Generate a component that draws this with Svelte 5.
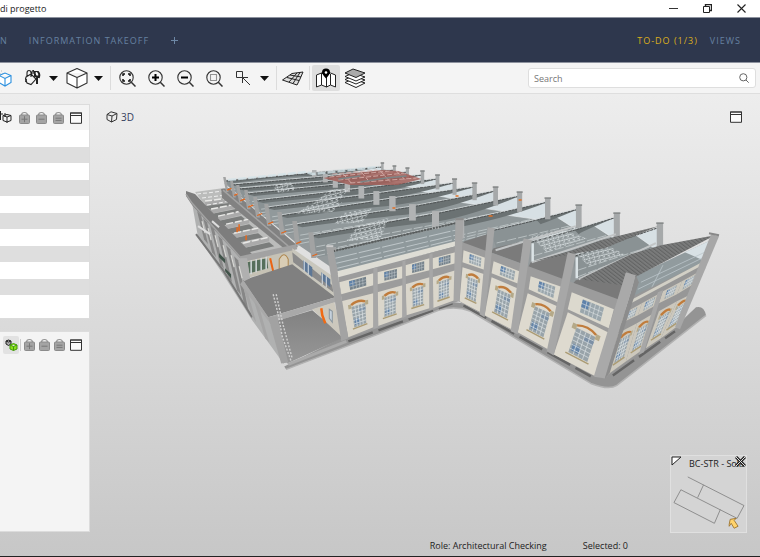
<script>
  const zoomTools = [
    { label: 'Zoom to fit', kind: 'fit' },
    { label: 'Zoom in', kind: 'in' },
    { label: 'Zoom out', kind: 'out' },
    { label: 'Zoom to area', kind: 'area' }
  ];
  const rows = Array.from({ length: 11 }, (_, i) => i);
  let query = $state('');

  const pts = (list) => list.map((p) => p.map((n) => n.toFixed(1)).join(',')).join(' ');
  const mix = (a, b, t) => [a[0] + (b[0] - a[0]) * t, a[1] + (b[1] - a[1]) * t];
  // point on a wall panel given as [top left, top right, bottom right, bottom left]
  const at = (q, u, v) => mix(mix(q[0], q[1], u), mix(q[3], q[2], u), v);
  const sub = (q, u0, u1, v0, v1) => [at(q, u0, v0), at(q, u1, v0), at(q, u1, v1), at(q, u0, v1)];
  const line = (a, b) => `M${a[0].toFixed(1)} ${a[1].toFixed(1)}L${b[0].toFixed(1)} ${b[1].toFixed(1)}`;
  const bars = (q, cols, lines) => {
    let d = '';
    for (let i = 1; i < cols; i++) d += line(at(q, i / cols, 0), at(q, i / cols, 1));
    for (let i = 1; i < lines; i++) d += line(at(q, 0, i / lines), at(q, 1, i / lines));
    return d;
  };

  // roof ridges, back to front: left end, middle post, right end
  const ridges = [
    [[225, 181], [313, 173], [382, 167]],
    [[232, 185], [324, 177], [394, 170]],
    [[238, 189], [334, 181], [407, 172]],
    [[246, 194], [346, 184], [422, 175]],
    [[255, 201], [360, 189], [437, 179]],
    [[266, 208], [375, 194], [454, 183]],
    [[279, 216], [391, 199], [474, 187]],
    [[294, 225], [411, 207], [495, 191]],
    [[310, 236], [434, 214], [519, 196]],
    [[332, 251], [459, 222], [547, 202]],
    [[490, 231], [536, 220], [578, 209]],
    [[527, 243], [574, 230], [616, 217]],
    [[571, 257], [618, 241], [659, 227]]
  ];
  const teeth = ridges.map((r, i) => {
    const [l, m, e] = r;
    const h = 6 + i * 1.35;
    const foot = [e[0] - 4, e[1] + h];
    const short = i > 9;
    return {
      l, m, e, h, short,
      ridge: `M${l}L${m}L${e}`,
      lens: i > 8
        ? `M${m}L${e}Q${e[0] - 34} ${e[1] + 14} ${m[0] + 4} ${m[1] + 4}Z`
        : `M${l}L${m}L${e}Q${m[0] + 28} ${m[1] + h * 0.3} ${m[0] - 6} ${m[1] + h * 0.5}T${l[0] + 8} ${l[1] + 2}Z`,
      plane: pts([l, m, e, foot, [m[0] + 4, m[1] + h + 5], [l[0] + 8, l[1] + h + 4]]),
      glass: pts([mix(m, e, 0.42), e, foot]),
      seam: [0.45, 0.75, 1].map((k) => line([l[0] + 6, l[1] + h * k + 3], [foot[0] - 3, foot[1] + (k - 1) * h * 0.3])).join(''),
      w: 2.5 + i * 0.32
    };
  });

  const lowBays = [
    [[341, 301], [373, 293], [373, 327], [348, 337]],
    [[377, 292], [402, 285], [402, 317], [377, 326]],
    [[405, 284], [429, 277], [429, 308], [406, 315]],
    [[432, 277], [455, 270], [454, 300], [432, 308]],
    [[462, 267], [484, 274], [480, 312], [459, 301]],
    [[491, 277], [519, 289], [513, 330], [484, 315]],
    [[527, 293], [561, 308], [549, 350], [517, 332]],
    [[567, 312], [609, 333], [595, 376], [553, 354]]
  ];
  const highBays = [
    [[339, 282], [373, 273], [373, 285], [341, 294]],
    [[377, 272], [402, 266], [402, 278], [377, 284]],
    [[405, 265], [429, 258], [429, 270], [405, 276]],
    [[432, 258], [455, 252], [455, 263], [432, 269]],
    [[463, 250], [486, 258], [485, 270], [462, 262]],
    [[493, 261], [521, 272], [519, 284], [491, 273]],
    [[530, 276], [562, 287], [559, 303], [528, 289]],
    [[571, 292], [613, 309], [608, 328], [567, 309]]
  ];
  const endLow = [
    [[617, 333], [636, 323], [625, 361], [607, 374]],
    [[636, 323], [653, 313], [641, 350], [625, 361]],
    [[658, 311], [676, 301], [660, 338], [645, 348]],
    [[676, 301], [692, 293], [675, 327], [660, 338]]
  ];
  const endHigh = [
    [[623, 313], [641, 303], [637, 315], [620, 323]],
    [[641, 303], [659, 293], [655, 305], [637, 315]],
    [[662, 291], [681, 281], [676, 294], [658, 303]],
    [[681, 281], [699, 271], [694, 283], [676, 294]]
  ];
  const tall = (q, u0, u1) => {
    const g = sub(q, u0, u1, 0.22, 0.8);
    const a = at(q, u0, 0.17), b = at(q, u1, 0.17), c = at(q, (u0 + u1) / 2, 0.06);
    return {
      wall: pts(q), glass: pts(g), bars: bars(g, 4, 6), blue: pts(sub(q, u0 + 0.04, (u0 + u1) / 2, 0.58, 0.74)),
      blue2: pts(sub(q, (u0 + u1) / 2, u1, 0.3, 0.42)),
      arch: `M${a}Q${c} ${b}`, sill: line(at(q, u0 - 0.06, 0.83), at(q, u1 + 0.04, 0.83)),
      keyL: pts(sub(q, u0 - 0.1, u0, 0.15, 0.27)), keyR: pts(sub(q, u1, u1 + 0.1, 0.15, 0.27))
    };
  };
  const wide = (q, u0, u1) => {
    const g = sub(q, u0, u1, 0.12, 0.86);
    return { wall: pts(q), glass: pts(g), bars: bars(g, 5, 3), blue: pts(sub(q, u0, u0 + 0.16, 0.15, 0.55)) };
  };
  const tallWindows = [...lowBays.map((q) => tall(q, 0.28, 0.73)), ...endLow.map((q) => tall(q, 0.24, 0.78))];
  const wideWindows = [...highBays.map((q) => wide(q, 0.28, 0.78)), ...endHigh.map((q) => wide(q, 0.26, 0.78))];

  // front columns: top left, top right, bottom right, bottom left
  const columns = [
    [[373, 268], [377, 267], [378, 327], [373, 329]],
    [[402, 261], [405, 260], [406, 316], [402, 318]],
    [[429, 254], [432, 253], [433, 308], [429, 310]],
    [[487, 227], [494, 228], [484, 317], [479, 314]],
    [[523, 238], [531, 240], [517, 334], [510, 331]],
    [[567, 252], [575, 254], [553, 355], [546, 351]],
    [[657, 292], [662, 290], [643, 352], [638, 354]]
  ];

  const meshes = [
    [[272, 185], [290, 182], [296, 190], [278, 193]],
    [[330, 190], [350, 188], [336, 203], [312, 204]],
    [[308, 205], [342, 202], [332, 212], [296, 214]],
    [[343, 213], [372, 208], [362, 222], [334, 224]],
    [[357, 226], [388, 218], [380, 239], [346, 241]],
    [[530, 236], [560, 229], [586, 238], [546, 252]],
    [[574, 252], [604, 244], [624, 254], [588, 266]]
  ];
  const cross = [
    [205, 201, 229, 198], [211, 209, 236, 204], [218, 216, 241, 211],
    [226, 224, 249, 219], [234, 233, 258, 228], [243, 243, 269, 237]
  ];
  const sideCols = [[197, 211, 203, 241], [203, 218, 211, 254], [210, 225, 219, 266], [218, 235, 227, 279], [226, 245, 236, 292], [234, 256, 243, 306]];
</script>

{#snippet bag(kind)}
  <svg width="13" height="14" viewBox="0 0 13 14" aria-hidden="true">
    <path d="M3.5 4.5Q3.5 1.5 6.5 1.5T9.5 4.5" fill="none" stroke="#949494" stroke-width="1.2" />
    <rect x="1.5" y="4" width="10" height="8.5" rx="1" fill="#a4a4a4" stroke="#8b8b8b" />
    <path d={kind === 'add' ? 'M3.5 8.2h6M6.5 5.2v6' : kind === 'remove' ? 'M3.5 8.2h6' : 'M3.5 7.2h6M3.5 9.4h6'} stroke="#777" />
  </svg>
{/snippet}
{#snippet frame()}
  <svg width="12" height="12" viewBox="0 0 12 12" aria-hidden="true">
    <path d="M.5 1h11v10.3H.5z" fill="#fafafa" stroke="#333" /><path d="M0 1h12M1 3.5h10" stroke="#333" />
  </svg>
{/snippet}
{#snippet caret()}
  <svg width="9" height="5" viewBox="0 0 9 5" aria-hidden="true"><path d="M0 0h9L4.5 5z" fill="#111" /></svg>
{/snippet}

<div class="app">
  <header class="titlebar">
    <span>di progetto</span>
    <div class="winbtns">
      <button aria-label="Minimise"><svg width="9" height="9" viewBox="0 0 9 9"><path d="M0 4.5h9" stroke="#333" /></svg></button>
      <button aria-label="Restore"><svg width="9" height="9" viewBox="0 0 9 9" fill="none" stroke="#222"><path d="M.5 2.5h6v6h-6z" /><path d="M2.5 2V.5h6v6H7" stroke-width="1.4" /></svg></button>
      <button aria-label="Close"><svg width="9" height="9" viewBox="0 0 9 9"><path d="M.5.5l8 8M8.5.5l-8 8" stroke="#222" stroke-width="1.1" /></svg></button>
    </div>
  </header>

  <nav>
    <a href="#previous">N</a>
    <a class="takeoff" href="#takeoff">INFORMATION TAKEOFF</a>
    <button class="plus" aria-label="Add tab"><svg width="7" height="7" viewBox="0 0 7 7"><path d="M0 3.5h7M3.5 0v7" stroke="#6d87a5" /></svg></button>
    <a class="todo" href="#todo">TO-DO (1/3)</a>
    <a href="#views">VIEWS</a>
  </nav>

  <div class="toolbar">
    <button class="first" aria-label="Model">
      <svg width="16" height="18" viewBox="0 0 16 18" fill="none" stroke="#2d91df" stroke-width="1.1"><path d="M1 2h6M2 5h5" stroke="#bbb" stroke-dasharray="1 1" /><path d="M3 6.5l6-2.5 6 2.5v7L9 17l-6-3.500zM3 6.500l6 3 6-3M9 9.500V17" fill="#fff" /></svg>
    </button>
    <div class="split">
      <button aria-label="Colour">
        <svg width="17" height="18" viewBox="0 0 17 18" fill="none" stroke="#222" stroke-width="1.1"><path d="M2 8l5-3 5 5-5 5.500-4-1.500-1.500-4zM3 7V4q0-2.500 2-2.500T7 4v4M8 5V3q0-1.500 1.500-1.500L10 5" /><path d="M2.500 10l-1 3" /><path d="M11 3h3q2 2 1 5l-4-1zM13 7v8" stroke-width="2" /><circle cx="12.500" cy="4" r="1" fill="#fff" stroke="none" /></svg>
      </button>
      <button class="arrow" aria-label="Colour options">{@render caret()}</button>
    </div>
    <div class="split box">
      <button aria-label="View cube">
        <svg width="22" height="22" viewBox="0 0 22 22" fill="#fff" stroke="#333" stroke-width="1.100"><path d="M1 6l10-4.500L21 6v10l-10 5L1 16zM1 6l10 4.500L21 6M11 10.500V21" stroke-linejoin="round" /></svg>
      </button>
      <button class="arrow" aria-label="View cube options">{@render caret()}</button>
    </div>
    <i></i>
    {#each zoomTools as t}
      <button class="zoom" aria-label={t.label}>
        <svg width="17" height="17" viewBox="0 0 17 17" fill="none" stroke="#333" stroke-width="1.1">
          <circle cx="7.500" cy="7.500" r="6.700" /><path d="M12.300 12.300L16.500 16.500" stroke-width="1.500" />
          {#if t.kind === 'in'}<path d="M4 7.500h7M7.500 4v7" stroke="#000" stroke-width="2" />
          {:else if t.kind === 'out'}<path d="M4 7.500h7" stroke="#000" stroke-width="2" />
          {:else if t.kind === 'fit'}<path d="M6 4H4v2M9 4h2v2M4 9v2h2M11 9v2H9" stroke="#111" stroke-width="1.500" />
          {:else}<rect x="4.500" y="4.500" width="6" height="6" stroke-dasharray="1 1" />{/if}
        </svg>
      </button>
    {/each}
    <div class="split">
      <button aria-label="Select">
        <svg width="16" height="16" viewBox="0 0 16 16" fill="none" stroke="#333"><path d="M1.500 1.500h6v6h-6z" /><path d="M15 15L7.500 7.500M7.500 13V7.500H13" /></svg>
      </button>
      <button class="arrow" aria-label="Select options">{@render caret()}</button>
    </div>
    <i></i>
    <button aria-label="Grid">
      <svg width="22" height="15" viewBox="0 0 22 15" fill="#ddd" stroke="#222" stroke-width="1"><path d="M.500 9L10 2.500 21 1l-3 7-3 6zM7 11l8-9M11 12.500L18 1.500M5 6.500l12 3M8 4l11 2" /></svg>
    </button>
    <i></i>
    <button class="on" aria-label="Map">
      <svg width="20" height="20" viewBox="0 0 20 20" fill="#fff" stroke="#222"><path d="M.500 7l5-2 5 2 4-2 5 2v12l-5-2-4 2-5-2-5 2zM5.500 5v12M10.500 9v10M14.500 6v11" /><path d="M10 10.500Q6 6 6 4.500a4 4 0 018 0Q14 6 10 10.500z" fill="#000" stroke="none" /><circle cx="10" cy="4.500" r="1.300" stroke="none" /></svg>
    </button>
    <button class="zoom" aria-label="Layers">
      <svg width="22" height="20" viewBox="0 0 22 20" stroke="#222" stroke-linejoin="round"><path d="M1 14.500l8-3.500 12 4-9 4.500z" fill="#fff" /><path d="M1 11.500L9 8l12 4-9 4z" fill="#fff" /><path d="M1 8.500L9 5l12 4-9 4z" fill="#fff" /><path d="M1 5L9 1l12 4-9 4.500z" fill="#aaa" /></svg>
    </button>
    <label class="search">
      <input type="text" placeholder="Search" aria-label="Search" bind:value={query} />
      <svg width="10" height="10" viewBox="0 0 10 10" fill="none" stroke="#666"><circle cx="4.300" cy="4.300" r="3.600" /><path d="M7 7l2.700 2.700" /></svg>
    </label>
  </div>

  <main>
    <aside>
      <section class="panel">
        <div class="tools">
          <svg width="12" height="13" viewBox="0 0 12 13" fill="none" stroke="#222"><path d="M.500 0v9M0 3h3" /><path d="M3 4.500l4-1 4 1v5l-4 1.500-4-1.500zM3 4.500l4 1.500 4-1.500M7 6v6M5 2v4" /></svg>
          <i></i>
          <button aria-label="Add to selection basket">{@render bag('add')}</button>
          <button aria-label="Remove from selection basket">{@render bag('remove')}</button>
          <button aria-label="Set selection basket">{@render bag('set')}</button>
          <button class="frame" aria-label="Maximise panel">{@render frame()}</button>
        </div>
        <ul>
          {#each rows as r (r)}<li></li>{/each}
        </ul>
      </section>
      <section class="panel info">
        <div class="tools tight">
          <button class="link" aria-label="Link selection">
            <svg width="13" height="12" viewBox="0 0 13 12"><path d="M1 2l2.500-1L6 2v3L3.500 6.500 1 5zM1 2l2.500 1L6 2" fill="#aaa" stroke="#222" /><path d="M5 6l3.500-1.500L12 6v4l-3.500 1.500L5 10zM5 6l3.500 1.500L12 6M8.500 7.500v4" fill="#8be01d" stroke="#43990a" /></svg>
          </button>
          <i></i>
          <button aria-label="Add to selection basket">{@render bag('add')}</button>
          <button aria-label="Remove from selection basket">{@render bag('remove')}</button>
          <button aria-label="Set selection basket">{@render bag('set')}</button>
          <button class="frame" aria-label="Maximise panel">{@render frame()}</button>
        </div>
      </section>
    </aside>

    <div class="view">
      <div class="viewhead">
        <h1>
          <svg width="12" height="12" viewBox="0 0 12 12" fill="none" stroke="#333"><path d="M1 3.500L5 .800l6 1.700-.500 6L5.500 11 1 8.500zM1 3.500l5 1.500 5-2.500M6 5l-.500 6" /></svg>
          3D
        </h1>
        <button aria-label="Maximise view">{@render frame()}</button>
      </div>

      <svg class="model" viewBox="180 155 545 240" role="img" aria-label="Building model">
        <defs>
          <pattern id="slats" width="3" height="3" patternUnits="userSpaceOnUse" patternTransform="rotate(38)"><rect width="3" height="3" fill="#7a7b7b" /><path d="M0 1h3" stroke="#626363" stroke-width="1" /></pattern>
          <pattern id="mesh" width="5" height="4" patternUnits="userSpaceOnUse" patternTransform="rotate(-14)"><path d="M0 1h3M2 3h2M4 0v2" stroke="#e4eaec" stroke-width="0.900" /></pattern>
          <linearGradient id="pave" x1="0" y1="0" x2="0" y2="1"><stop offset="0" stop-color="#818181" /><stop offset="1" stop-color="#979797" /></linearGradient>
        </defs>

        <!-- ground slab -->
        <path d="M284 366L342 337 430 306Q445 300 462 303L596 376 674 327 695 307Q703 305 705 315L616 385Q608 390 590 383L470 311Q455 305 438 310L380 333 286 369z" fill="#949494" />
        <path d="M286 369L380 333 438 310Q455 305 470 311L590 383Q608 390 616 385L705 315" fill="none" stroke="#b2b2b2" stroke-width="1.500" />
        <path d="M348 341L452 303M463 305L590 376M612 375L674 331" stroke="#656565" stroke-width="2.500" stroke-dasharray="26 6" />

        <!-- west wing -->
        <path d="M192 203L245 258 248 282 268 317 284 364 268 342 252 320 223 274 198 237z" fill="#b0b1b1" />
        {#each sideCols as [a, b, c, d]}
          <path d={`M${a} ${b}l4 4L${c + 5} ${d + 3}l-4-5z`} fill="#868686" />
          <path d={`M${a + 5} ${b + 10}l3 12`} stroke="#d8d8d5" stroke-width="1.200" />
        {/each}
        <path d="M196 234L223 270 252 317" fill="none" stroke="#777" stroke-width="2" />
        <path d="M219 253l6 6v4l-6-6zM225 268l6 6v4l-6-7z" fill="#41544a" />
        <path d="M195 192L224 188 298 247 246 259z" fill="#bbbcbb" />
        {#each cross as [a, b, c, d]}
          <path d={`M${a} ${b + 5}L${c} ${d + 5}l5 4L${a + 6} ${b + 9}z`} fill="#7b7d7c" />
          <path d={`M${a} ${b}L${c} ${d}v4L${a} ${b + 5}z`} fill="#aaa" />
          <path d={`M${a} ${b}L${c} ${d}`} stroke="#e9e9e7" stroke-width="1.500" stroke-dasharray="7 2" />
        {/each}
        <path d="M197 194l25-3M202 198l24-3M207 205l22-4" stroke="#eee" stroke-dasharray="4 2" />
        <path d="M186 191L195 194 252 254 241 259 192 205 186 196z" fill="#7d7d7d" />
        <path d="M221 189L229 188 298 246 286 250 222 198z" fill="#828282" />
        <path d="M186 194L192 203 242 259M223 190L288 246" fill="none" stroke="#a2a2a2" stroke-width="1.500" />
        <path d="M239 224v7M246 235v5M237 227v5" stroke="#e66a20" stroke-width="1.500" />
        <path d="M198 226l12 8M212 221l7 6" stroke="#ddd" stroke-width="2" />

        <!-- courtyard -->
        <path d="M245 258L294 247 296 266 250 277z" fill="#c6c2b5" />
        <path d="M247 262L267 258 268 268 249 273z" fill="#566f5c" />
        <path d="M251 259v15M256 258v14M261 257v13M266 256v13" stroke="#d4dadd" stroke-width="1.500" />
        <path d="M279 269v-10q5-9 9 0v9" fill="#d9cdb5" stroke="#ad844a" />
        <path d="M240 256L296 244 297 249 242 262z" fill="#a2a2a2" />
        <path d="M292 248L331 275 336 300 294 268z" fill="#c9c7bd" />
        <path d="M292 252L332 285 333 292 293 262z" fill="#8b8b8b" />
        <path d="M303 260l9 7v10l-9-8zM321 272l9 7v8l-9-8z" fill="#5d7796" />
        <path d="M304 260v11M308 263v11M322 273v11M326 276v11" stroke="#d8dfe6" />
        <path d="M270 258l3 13M280 268l2 3" stroke="#eb6413" stroke-width="2" />
        <path d="M243 280L292 264 335 297 268 317z" fill="#808080" />
        <path d="M238 258L247 258 250 278 244 281z" fill="#b0b0b0" />
        <path d="M243 280L268 317 335 297V302L270 323 240 284z" fill="#a9a9a9" />
        <path d="M272 322L312 310 344 337 287 363z" fill="url(#pave)" />
        <path d="M312 309L334 302 343 338z" fill="#ccc8bd" /><path d="M329 309l3 2v11l-3-4z" fill="#c5d1dc" stroke="#8a969e" />
        <path d="M321 308l1 7 3 8" fill="none" stroke="#f06a14" stroke-width="2.500" />
        <path d="M268 317L277 316 288 362 281 363z" fill="#a2a2a2" /><path d="M254 301l5 6 10 35-4-4zM243 287l5 6 8 29-4-6z" fill="#a5a5a5" />
        <path d="M273 294L278 314 282 336 291 361M276 294L283 325 292 358" fill="none" stroke="#d0d0d0" stroke-width="1.400" stroke-dasharray="2 1.500" />
        <path d="M288 364L346 341" stroke="#aaa" stroke-width="3" />

        <!-- saw-tooth roof -->
        <path d="M224 183L313 174 382 169 422 179 516 205 545 217 577 226 612 236 652 247 632 276 620 301 462 246 338 272 300 246z" fill="#949a9c" />
        {#each teeth as t, i}
          <polygon points={t.plane} fill={i % 2 ? '#91999b' : '#8a9294'} />
          <path d={t.seam} stroke="#c3cacc" stroke-width="0.800" stroke-dasharray="9 2" />
          <polygon points={t.glass} fill="#d7e0e4" stroke="#eef2f3" stroke-width="0.600" />
          {#if i !== 12}<path d={t.lens} fill="#6b7273" />{/if}
          <path d={t.ridge} fill="none" stroke="#d5dadb" stroke-width="0.800" transform="translate(0 -1)" />
          <path d={t.ridge} fill="none" stroke="#505455" stroke-width="1" stroke-dasharray="3 0.600" />
        {/each}
        {#each teeth as t, i}
          <rect x={t.e[0] - t.w / 2} y={t.e[1] - 4} width={t.w} height={t.h + 3} fill="#a6a9aa" />
          <path d={`M${t.e[0] - t.w / 2 - 0.5} ${t.e[1] - 4}h${t.w + 1}`} stroke="#858888" stroke-width="1.600" />
          {#if !t.short}
            <rect x={t.m[0] - t.w / 2} y={t.m[1] - 3} width={t.w + 2} height={t.h + 1} fill="#b1b3b4" />
            <path d={`M${t.l[0] - 2} ${t.l[1] - 4}h${t.w}l3 ${t.h + 9}h-${t.w}z`} fill="#a2a3a3" />
            {#if i < 9}<path d={`M${t.l[0] + 2} ${t.l[1] + t.h + 3}l5-2`} stroke="#e0671f" stroke-width="1.300" />{/if}
          {/if}
        {/each}
        {#each meshes as m}<polygon points={pts(m)} fill="url(#mesh)" />{/each}
        <path d="M323 178L345 174 382 170 398 171 421 179 397 185 350 185z" fill="#a3605a" opacity=".85" />
        <path d="M329 177l60-6M338 180l66-7M350 183l66-5M332 174l45-4M343 174l8 9M361 172l9 11M380 171l10 11M396 171l9 9" stroke="#dbb5b0" stroke-width=".800" stroke-dasharray="5 2" />
        <path d="M338 179l22-3M360 182l26-4M386 178l20-2" stroke="#7c8485" stroke-width="1.500" />
        <path d="M228 180l78-8 6 2 66-7" fill="none" stroke="#d5e3e8" stroke-width="2.500" opacity=".800" stroke-dasharray="8 2" />
        <path d="M488 216h4M392 208h3M518 200h3M455 196h3" stroke="#df7026" stroke-width="1.500" />

        <!-- gutters behind the street front -->
        <path d="M464 241L490 233 487 252 462 243z" fill="#7b7b7b" /><path d="M493 248L523 241 523 264 490 252z" fill="#7b7b7b" />
        <path d="M530 262L568 254 565 282 527 268z" fill="#7b7b7b" /><path d="M575 280L632 270 622 302 570 286z" fill="#797979" />
        <path d="M531 262L615 234M578 279L655 243M495 250L575 226" stroke="#c2c5c6" stroke-width="2" />
        <path d="M533 261L572 250 600 240 657 226 604 248z" fill="url(#slats)" />
        <path d="M532 243v18M576 257v21" stroke="#dbe3e6" stroke-width="2.500" />
        <path d="M634 276L714 238 702 264 629 301z" fill="#919b9e" />
        <path d="M684 252L714 238 702 260z" fill="#d8e1e5" />
        <path d="M640 282L706 251M637 289L703 257M662 265l-12 24" stroke="#bcc6ca" stroke-width=".800" />
        <path d="M579 279L630 254 660 245 714 235 636 276 621 285z" fill="url(#slats)" />

        <!-- front glazing -->
        <path d="M333 252L455 225 455 243 338 272z" fill="#8f999c" />
        <path d="M335 258L455 230M336 263L455 235M337 268L455 239" stroke="#bdc5c8" stroke-width="1" stroke-dasharray="22 2" />
        <path d="M333 251L455 223" stroke="#5a5e5e" stroke-width="2" stroke-dasharray="2 1" />
        <path d="M337 271L455 241V246L338 277z" fill="#deddd5" />
        <!-- street front beams -->
        <path d="M338 277L455 246 462 242 620 300 607 376 596 377 458 301 347 338z" fill="#9c9c9c" />
        <path d="M630 297L702 262 704 268 676 328 606 376 612 340z" fill="#979797" />
        <path d="M629 302L702 263" stroke="#d2d0c6" stroke-width="3" />
        {#each tallWindows as w, i}
          <polygon points={w.wall} fill={i > 7 ? '#ccc8bd' : i > 3 ? '#dedacf' : '#dad6cb'} />
          <polygon points={w.glass} fill="#98a3a9" />
          <polygon points={w.blue} fill="#6484a8" /><polygon points={w.blue2} fill="#7c90a5" />
          <path d={w.bars} stroke="#dde2e4" stroke-width=".700" />
          <polygon points={w.keyL} fill="#b5a988" /><polygon points={w.keyR} fill="#b5a988" />
          <path d={w.arch} fill="none" stroke="#c07c3c" stroke-width="2.400" />
          <path d={w.sill} stroke="#ab9b73" stroke-width="1.400" />
        {/each}
        {#each wideWindows as w, i}
          <polygon points={w.wall} fill={i > 7 ? '#ccc8bd' : '#dcd9ce'} />
          <polygon points={w.glass} fill={i < 4 ? '#74818a' : '#9aa6ac'} />
          <polygon points={w.blue} fill="#5f82aa" />
          <path d={w.bars} stroke={i < 4 ? '#b9c1c6' : '#dde2e4'} stroke-width=".600" />
        {/each}
        {#each columns as c}<polygon points={pts(c)} fill="#a7a7a7" />{/each}
        <path d="M326 247L333 247 348 338 341 341z" fill="#a3a3a3" /><path d="M326 246h7" stroke="#ccc" stroke-width="2" />
        <path d="M455 219L463 219 459 301 453 301z" fill="#a6a6a6" /><path d="M455 219h8" stroke="#8c8c8c" stroke-width="2" />
        <path d="M625 272L635 275 604 378 593 376z" fill="#a9a9a9" /><path d="M635 275L604 378 609 372 638 282z" fill="#8c8c8c" />
        <path d="M710 234L718 236 679 329 674 327z" fill="#a7a7a7" /><path d="M708 233l10 2" stroke="#888" stroke-width="2" />
      </svg>

      <div class="keyplan">
        <div class="planhead">
          <svg width="11" height="10" viewBox="0 0 11 10"><path d="M1 1h9L1 9z" fill="#fff" stroke="#222" /></svg>
          <span>BC-STR - Sola</span>
        </div>
        <button aria-label="Close plan"><svg width="11" height="11" viewBox="0 0 11 11"><path d="M1 1l9 9M10 1l-9 9" stroke="#222" stroke-width="3" /><path d="M1 1l9 9M10 1l-9 9" stroke="#ddd" /></svg></button>
        <svg viewBox="0 0 76 60" role="img" aria-label="Level plan">
          <path d="M17 5L74 34 67 47 10 18 3 31 44 52 50 38M33 13L27 26" fill="none" stroke="#858585" stroke-width=".900" />
          <path d="M59 53l1-5 6-1-2 2 4 6-4 2-3-5-2 3z" fill="#ffd36c" stroke="#9b722c" stroke-width=".900" />
        </svg>
      </div>

      <footer><span>Role: Architectural Checking</span><span>Selected: 0</span></footer>
    </div>
  </main>
</div>

<style>
  :global(body) { margin: 0; }
  .app { min-height: 100vh; box-sizing: border-box; display: flex; flex-direction: column; border-bottom: 1px solid #222; font-family: "Open Sans", "Noto Sans", sans-serif; font-size: 9px; color: #222; background: #fff; overflow: hidden; }
  button { display: flex; align-items: center; justify-content: center; border: 0; padding: 0; background: none; font: inherit; color: inherit; flex: none; }
  svg { display: block; flex: none; }
  a { text-decoration: none; color: #6681a0; }
  .titlebar { height: 17px; display: flex; align-items: center; justify-content: space-between; }
  .winbtns { display: flex; padding-right: 2px; }
  .winbtns button { width: 34px; height: 16px; }
  nav { height: 44px; display: flex; align-items: center; padding-right: 19px; background: #2e374d; border-top: 1px solid #8d929e; border-bottom: 1px solid #8d929e; letter-spacing: 1px; }
  .takeoff { margin-left: 21px; }
  .plus { margin-left: 22px; }
  .todo { margin-left: auto; margin-right: 12px; color: #dcae1c; }
  .toolbar { height: 30px; display: flex; align-items: center; background: #f4f4f4; border-bottom: 1px solid #dedede; }
  .toolbar button { width: 28px; height: 26px; }
  .toolbar .first { width: 18px; justify-content: flex-start; }
  .first svg { margin-left: -4px; }
  .split { display: flex; margin-right: 3px; }
  .toolbar .arrow { width: 14px; }
  .toolbar .zoom { margin-right: 1px; }
  .toolbar i { width: 1px; height: 24px; margin: 0 2px; background: #dcdcdc; }
  .toolbar .on { background: #dedede; border-radius: 2px; margin-right: 1px; }
  .search { display: flex; align-items: center; width: 30%; min-width: 120px; height: 20px; margin-left: auto; margin-right: 4px; padding-right: 6px; border: 1px solid #dedede; border-radius: 3px; background: #fff; box-sizing: border-box; }
  .search input { flex: 1; min-width: 0; border: 0; outline: 0; padding: 0 5px; background: none; font: inherit; color: #444; }
  .search input::placeholder { color: #777; opacity: 1; }
  main { flex: 1; display: flex; background: linear-gradient(#ededed, #c7c7c7); }
  aside { width: 90px; flex: none; display: flex; flex-direction: column; gap: 12px; padding-top: 10px; }
  .panel { background: #f4f4f4; border: 1px solid #dcdcdc; border-left: 0; }
  .panel.info { min-height: 199px; }
  .tools { height: 25px; display: flex; align-items: center; justify-content: flex-end; gap: 1px; padding-right: 6px; }
  .tools button { width: 16px; height: 18px; }
  .tools i { width: 1px; height: 12px; margin: 0 1px; background: #ccc; }
  .tools .frame { width: 14px; margin-left: 2px; }
  .tight { gap: 0; }
  .tight button { width: 15px; }
  .tight .link { width: 16px; background: #e2e2e2; border-radius: 2px; }
  ul { list-style: none; margin: 0; padding: 0; display: grid; grid-template-rows: repeat(5, 17px 16px) 23px; background: #fff; }
  li:nth-child(even) { background: #dedede; }
  .view { flex: 1; min-width: 0; display: flex; flex-direction: column; }
  .viewhead { display: flex; align-items: center; justify-content: space-between; padding: 15px 18px 0 16px; height: 16px; }
  h1 { display: flex; align-items: center; gap: 3px; margin: 0; font-size: 10px; font-weight: 400; color: #34415e; }
  .model { width: 81.5%; margin: 30px 0 0 90px; box-sizing: border-box; }
  .keyplan { position: relative; align-self: flex-end; width: 77px; margin: 60px 13px 0 0; border: 1px solid #e0e0e0; box-sizing: border-box; background: #d4d4d4; }
  .planhead { display: flex; align-items: flex-start; height: 16px; }
  .planhead span { margin-left: 7px; white-space: nowrap; line-height: 16px; }
  .keyplan button { position: absolute; top: 0; right: 0; }
  footer { display: flex; justify-content: flex-end; gap: 36px; padding-right: 132px; margin-top: auto; height: 20px; line-height: 20px; white-space: nowrap; }
</style>
